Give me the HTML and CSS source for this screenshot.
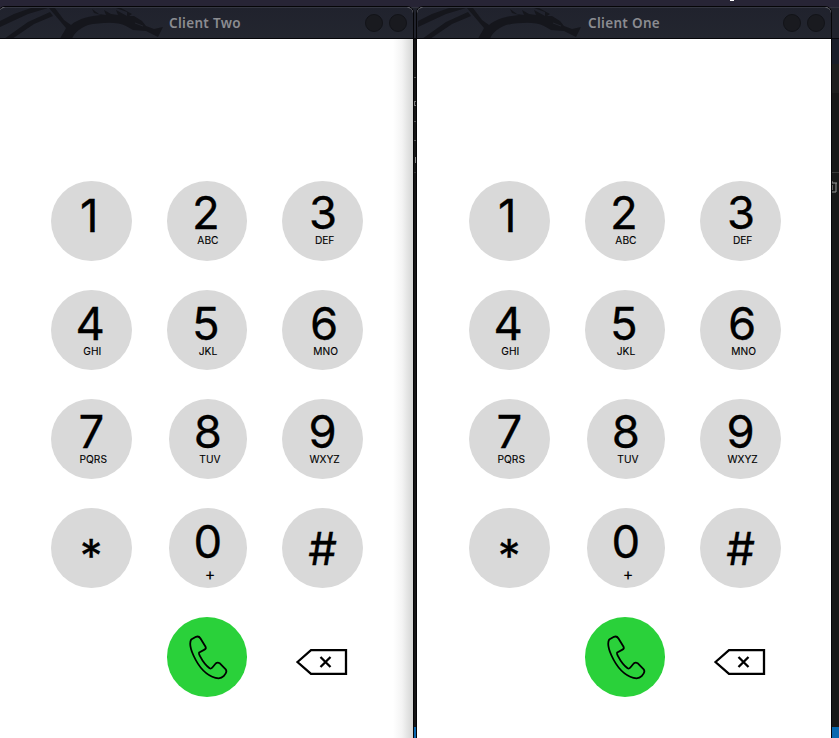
FILE: index.html
```
<!DOCTYPE html>
<html lang="en">
<head>
<meta charset="utf-8">
<title>Dialer</title>
<link rel="stylesheet" href="styles.css">
</head>
<body>
<svg class="symbols" aria-hidden="true">
  <symbol id="dragon" viewBox="0 0 165 31">
    <path d="M0 13L14 6L31 0H48L28 6L0 19z"/>
    <path d="M4 31L28 14L50 4L53 8L34 16L12 31z"/>
    <path d="M49 0H55L64 12L71 17C79 10 91 8 101 7L94 5L92 1L99 6L106 7L104 2L111 6L118 7L116 2L127 8L127 4L116 0H121L132 6L129 8H134L142 13L146 18L154 21L163 19L158 29L146 23L133 22L126 18C117 13 99 15 88 17C80 20 74 25 72 31H60C62 26 65 23 66 20z"/>
    <path class="eye" d="M135 15l8 3"/>
  </symbol>
  <symbol id="handset" viewBox="0 0 40 46">
    <path d="M2.2 4.5L7 1.8C9 1 10.500 1.800 11.500 3.500L16.400 11.500C17.200 13 16.800 14 15.500 14.600L10.200 17.500C9.500 18.100 10.200 19.600 11 21.200C13.500 26 16.600 30.500 20.600 33.300C22.200 34.200 23.200 33 24.200 31.500L26.700 28.500C28 27.400 29.300 27.400 30.600 28.200L36.500 34.200C37.600 35.500 37.600 37 36.600 38.500L34.600 41.200C32.500 43.500 30 43.800 26.500 42.900C17 40.300 9.500 31.500 4.500 20.500C1.800 14.500 .400 7.500 2.200 4.500z"/>
  </symbol>
  <symbol id="erase" viewBox="0 0 54 28">
    <path d="M2.500 14L16 2.200H51V25.800H16z"/>
    <path class="cross" d="M25.500 9l10 10M35.500 9l-10 10"/>
  </symbol>
</svg>
<div class="desktop">
  <span class="caret"></span>
  <div class="editor">
    <div class="editor-title"></div>
    <div class="editor-menu"></div>
    <div class="editor-tabs"></div>
    <div class="editor-code"></div>
    <div class="editor-panel">
      <svg class="trash" viewBox="0 0 9 13"><path d="M0 3h8M0 1h3v2M7 3v9H0"/><path class="bars" d="M1.500 5v5M3.500 5v5"/></svg>
    </div>
    <div class="editor-status"></div>
  </div>
  <div class="gutter"><i class="g1"></i><i class="g2"></i><i class="g3"></i><i class="g4"></i><i class="g5"></i><i class="g6"></i></div>

  <section class="window window-two">
    <header class="titlebar">
      <svg class="dragon"><use href="#dragon"/></svg>
      <h1>Client Two</h1>
      <div class="controls"><i></i><i></i></div>
    </header>
    <main class="pad">
      <button class="key k1"><b>1</b></button>
      <button class="key k2"><b>2</b><small>ABC</small></button>
      <button class="key k3"><b>3</b><small>DEF</small></button>
      <button class="key k4"><b>4</b><small>GHI</small></button>
      <button class="key k5"><b>5</b><small>JKL</small></button>
      <button class="key k6"><b>6</b><small>MNO</small></button>
      <button class="key k7"><b>7</b><small>PQRS</small></button>
      <button class="key narrow k8"><b>8</b><small>TUV</small></button>
      <button class="key k9"><b>9</b><small>WXYZ</small></button>
      <button class="key star"><b>*</b></button>
      <button class="key narrow k0"><b>0</b><small>+</small></button>
      <button class="key hash"><b>#</b></button>
      <button class="key call"><svg><use href="#handset"/></svg></button>
      <button class="erase"><svg><use href="#erase"/></svg></button>
    </main>
  </section>

  <section class="window window-one">
    <header class="titlebar">
      <svg class="dragon"><use href="#dragon"/></svg>
      <h1>Client One</h1>
      <div class="controls"><i></i><i></i></div>
    </header>
    <main class="pad">
      <button class="key k1"><b>1</b></button>
      <button class="key k2"><b>2</b><small>ABC</small></button>
      <button class="key k3"><b>3</b><small>DEF</small></button>
      <button class="key k4"><b>4</b><small>GHI</small></button>
      <button class="key k5"><b>5</b><small>JKL</small></button>
      <button class="key k6"><b>6</b><small>MNO</small></button>
      <button class="key k7"><b>7</b><small>PQRS</small></button>
      <button class="key narrow k8"><b>8</b><small>TUV</small></button>
      <button class="key k9"><b>9</b><small>WXYZ</small></button>
      <button class="key star"><b>*</b></button>
      <button class="key narrow k0"><b>0</b><small>+</small></button>
      <button class="key hash"><b>#</b></button>
      <button class="key call"><svg><use href="#handset"/></svg></button>
      <button class="erase"><svg><use href="#erase"/></svg></button>
    </main>
  </section>
</div>
</body>
</html>
```
FILE: styles.css
```
* { box-sizing: border-box; }
body { margin: 0; background: #272435; }
.symbols { position: absolute; width: 0; height: 0; }
.desktop { position: relative; width: 839px; height: 738px; overflow: hidden; background: #272435; }
.caret { position: absolute; left: 730px; top: 0; width: 4px; height: 1px; background: #fff; }

/* Editor window behind the two clients */
.editor { position: absolute; left: 400px; right: 0; top: 7px; bottom: 0; display: flex; flex-direction: column; background: #181818; }
.editor-title { height: 32px; background: #20222c; border-top: 1px solid #33343e; border-bottom: 1px solid #08080c; }
.editor-menu { height: 25px; background: #191d29; }
.editor-tabs { height: 29px; background: #1f1f1f; }
.editor-code { height: 79px; background: #181818; }
.editor-panel { flex: 1; border-top: 1px solid #3a3a3a; padding: 7px 1px 0 0; }
.trash { display: block; width: 9px; height: 13px; margin-left: auto; }
.trash path { fill: none; stroke: #9a9a9a; stroke-width: 1; }
.trash .bars { stroke: #666; }
.editor-status { height: 11px; background: #0868b0; }

/* Sliver of editor text visible between the clients */
.gutter { position: absolute; left: 413px; top: 39px; width: 4px; height: 688px; background: #151515; }
.gutter i { position: absolute; right: 1px; width: 3px; height: 1px; background: #555; }
.gutter .g1 { top: 38px; }
.gutter .g2 { top: 62px; width: 2px; height: 5px; border: 1px solid #777; border-right: 0; background: none; }
.gutter .g3 { top: 82px; }
.gutter .g4 { top: 101px; }
.gutter .g5 { top: 118px; width: 1px; height: 6px; background: #888; }
.gutter .g6 { top: 133px; background: #333; }

.window { position: absolute; top: 7px; width: 414px; height: 731px; background: #fff; border-radius: 6px 6px 0 0; box-shadow: 0 0 0 1px #050507; }
.window-two { left: -1px; }
.window-two::after { content: ""; position: absolute; right: 0; top: 32px; bottom: 0; width: 20px; background: linear-gradient(to right, rgba(60,65,60,0), rgba(60,65,60,.06) 45%, rgba(60,65,60,.22)); }
.window-one { left: 417px; }

.titlebar { position: relative; display: grid; grid-template-columns: 1fr auto; align-items: center; height: 32px; border-top: 1px solid #343641; border-bottom: 1px solid #050508; border-radius: 6px 6px 0 0; background: linear-gradient(#20222d, #23262f); overflow: hidden; }
.dragon { position: absolute; left: 1px; top: 0; width: 165px; height: 31px; fill: #15161c; }
#dragon .eye { fill: none; stroke: #22242d; stroke-width: 1; }
.titlebar h1 { position: relative; margin: 0 0 0 170px; font: 600 13.500px/30px "Noto Sans", sans-serif; letter-spacing: .32px; color: #8b8c91; white-space: nowrap; }
.window-one h1 { margin-left: 171px; }
.controls { display: flex; gap: 6px; padding-right: 6px; }
.controls i { width: 18px; height: 18px; border-radius: 50%; background: #191a1f; border: 1px solid #121318; }

.pad { display: grid; grid-template-columns: repeat(3, 80.500px); grid-auto-rows: 80px; column-gap: 35.200px; row-gap: 29px; padding: 142px 0 0 52px; }
.key { display: flex; flex-direction: column; align-items: center; width: 80.500px; height: 80px; margin: 0; padding: 9px 0 0; border: 0; border-radius: 50%; background: #d9d9d9; color: #000; font-family: Inter, sans-serif; }
.key b { font-size: 45.500px; line-height: 46px; font-weight: 400; -webkit-text-stroke: .3px #000; transform: translateX(var(--digit, 0)); }
.key small { margin-top: -2px; font-size: 10.200px; line-height: 12px; -webkit-text-stroke: .12px #000; transform: translateX(var(--label, 1px)); }
.narrow { width: 78.500px; margin-left: 2px; }
.k1 { padding-top: 12px; --digit: -2px; }
.k2 { --digit: -1px; }
.k3 { --digit: .5px; --label: 2px; }
.k4, .k5, .k6, .k0 { padding-top: 11px; }
.k4, .k5 { --digit: -1px; }
.k6 { --digit: 1.500px; --label: 3px; }
.k7, .k8, .k9 { padding-top: 10px; --label: 2px; }
.star { padding-top: 25px; }
.k0 { --label: 2px; }
.k0 small { font-size: 16px; line-height: 22px; }
.hash { padding-top: 18px; }
.call { grid-column: 2; background: #2ad13a; padding: 18px 0 0 5px; }
.call svg { width: 40px; height: 46px; fill: none; stroke: #000; stroke-width: 1.800; stroke-linejoin: round; }
.erase { display: block; align-self: start; width: 54px; height: 28px; margin: 31px 0 0 13px; padding: 0; border: 0; background: none; }
.erase svg { display: block; width: 54px; height: 28px; fill: none; stroke: #000; stroke-width: 2.300; }
```
